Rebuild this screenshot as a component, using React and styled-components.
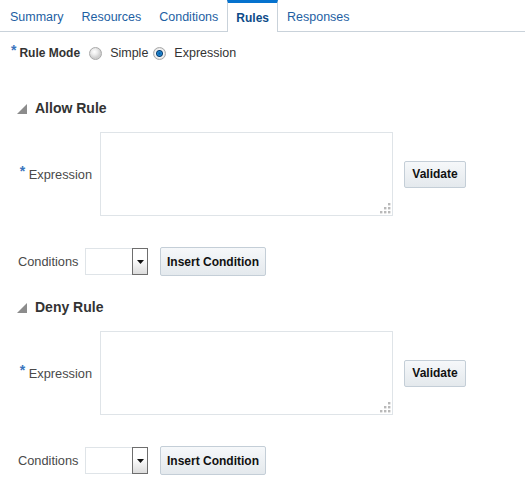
import React from "react";
import styled, { createGlobalStyle } from "styled-components";

const GlobalStyle = createGlobalStyle`
    body {
        margin: 0;
        background: #fff;
        font-family: "Liberation Sans", Arial, sans-serif;
    }
`;

const tabs = ["Summary", "Resources", "Conditions", "Rules", "Responses"];

function Disclosure() {
    return (
        <svg width="11" height="10" viewBox="0 0 11 10">
            <polygon points="10,0 10,10 0,10" fill="#8c8c8c" />
        </svg>
    );
}

function Grip() {
    const dots = [
        [9, 1],
        [5, 5],
        [9, 5],
        [1, 9],
        [5, 9],
        [9, 9],
    ];
    return (
        <GripBox>
            <svg width="11" height="11" viewBox="0 0 11 11">
                {dots.map(([x, y], i) => (
                    <rect key={i} x={x - 1} y={y - 1} width="2.4" height="2.4" fill="#b9b9b9" />
                ))}
            </svg>
        </GripBox>
    );
}

function RuleSection({ title, first }) {
    return (
        <Section first={first}>
            <SectionHeader>
                <Disclosure />
                <SectionTitle>{title}</SectionTitle>
            </SectionHeader>
            <ExpressionRow>
                <ExprLabel>
                    <Req>*</Req> Expression
                </ExprLabel>
                <AreaWrap>
                    <TextArea />
                    <Grip />
                </AreaWrap>
                <Button wide={62} tall={27}>Validate</Button>
            </ExpressionRow>
            <ConditionRow>
                <CondLabel>Conditions</CondLabel>
                <Select>
                    <SelectValue />
                    <SelectButton>
                        <svg width="7" height="4" viewBox="0 0 7 4">
                            <polygon points="0,0 7,0 3.5,4" fill="#111" />
                        </svg>
                    </SelectButton>
                </Select>
                <Button wide={106} tall={29}>Insert Condition</Button>
            </ConditionRow>
        </Section>
    );
}

export default function App() {
    return (
        <>
            <GlobalStyle />
            <Page>
                <TabBar>
                    {tabs.map((t) => (
                        <Tab key={t} active={t === "Rules"}>
                            {t}
                        </Tab>
                    ))}
                </TabBar>
                <ModeRow>
                    <Req>*</Req>
                    <ModeLabel>Rule Mode</ModeLabel>
                    <Radio />
                    <RadioText>Simple</RadioText>
                    <Radio checked />
                    <RadioText>Expression</RadioText>
                </ModeRow>
                <RuleSection title="Allow Rule" first />
                <RuleSection title="Deny Rule" />
            </Page>
        </>
    );
}

const Page = styled.div`
    width: 525px;
    color: #333;
`;

const TabBar = styled.div`
    display: flex;
    align-items: flex-end;
    height: 31px;
    padding-left: 1px;
    border-bottom: 1px solid #c9d2da;
`;

const Tab = styled.div`
    height: 32px;
    margin-bottom: ${(p) => (p.active ? "-1px" : "0")};
    box-sizing: border-box;
    display: flex;
    align-items: center;
    padding: 0 ${(p) => (p.active ? "8px" : "9px")};
    padding-top: ${(p) => (p.active ? "0" : "3px")};
    font-size: ${(p) => (p.active ? "12px" : "12.5px")};
    font-weight: ${(p) => (p.active ? "bold" : "normal")};
    color: ${(p) => (p.active ? "#0d4b88" : "#1e5fa3")};
    background: #fff;
    border-top: ${(p) => (p.active ? "3px solid #0572ce" : "none")};
    border-left: ${(p) => (p.active ? "1px solid #c9d2da" : "none")};
    border-right: ${(p) => (p.active ? "1px solid #c9d2da" : "none")};
`;

const Req = styled.span`
    color: #3a74bd;
    font-size: 14px;
    font-weight: bold;
    position: relative;
    top: -3px;
`;

const ModeRow = styled.div`
    display: flex;
    align-items: center;
    height: 20px;
    margin-top: 11px;
    padding-left: 11px;
    font-size: 12.5px;
`;

const ModeLabel = styled.span`
    margin-left: 3px;
    font-weight: bold;
    font-size: 12px;
    color: #333;
    margin-right: 9px;
`;

const Radio = styled.span`
    width: 11px;
    height: 11px;
    border-radius: 50%;
    border: 1px solid #a9a9a9;
    background: ${(p) =>
        p.checked
            ? "radial-gradient(circle, #0b5da8 0, #1f86d0 2px, #0b3f70 3px, #f6f6f6 4px, #d8d8d8 6px)"
            : "radial-gradient(circle at 40% 35%, #ffffff 0, #ececec 3px, #cfcfcf 6px)"};
    margin-right: 8px;
`;

const RadioText = styled.span`
    color: #333;
    margin-right: 5px;
`;

const Section = styled.div`
    margin-top: ${(p) => (p.first ? "35px" : "21px")};
`;

const SectionHeader = styled.div`
    display: flex;
    align-items: center;
    height: 20px;
    padding-left: 17px;
    gap: 7px;
    svg {
        margin-top: 1px;
    }
`;

const SectionTitle = styled.span`
    font-size: 14px;
    font-weight: bold;
    color: #333;
`;

const ExpressionRow = styled.div`
    display: flex;
    align-items: center;
    margin-top: 14px;
    padding-left: 18px;
`;

const ExprLabel = styled.span`
    width: 74px;
    margin-right: 8px;
    text-align: right;
    font-size: 12.8px;
    color: #4a4a4a;
    white-space: nowrap;
`;

const AreaWrap = styled.div`
    position: relative;
    width: 293px;
    height: 84px;
`;

const TextArea = styled.textarea`
    display: block;
    width: 100%;
    height: 100%;
    box-sizing: border-box;
    border: 1px solid #dfe4e8;
    resize: none;
    outline: none;
    margin: 0;
    padding: 2px;
`;

const GripBox = styled.div`
    position: absolute;
    right: 2px;
    bottom: 2px;
    line-height: 0;
`;

const Button = styled.div`
    width: ${(p) => p.wide}px;
    height: ${(p) => p.tall}px;
    box-sizing: border-box;
    display: flex;
    align-items: center;
    justify-content: center;
    border: 1px solid #c4ced7;
    border-radius: 2px;
    background: linear-gradient(#f6f8fa, #e4e9ed);
    font-size: 12px;
    font-weight: bold;
    color: #111;
    margin-left: 11px;
    white-space: nowrap;
`;

const ConditionRow = styled.div`
    display: flex;
    align-items: center;
    margin-top: 31px;
    padding-left: 18px;
    height: 29px;
    ${Button} {
        margin-left: 12px;
    }
`;

const CondLabel = styled.span`
    width: 67px;
    font-size: 12.8px;
    color: #4a4a4a;
`;

const Select = styled.div`
    display: flex;
    width: 63px;
    height: 27px;
    box-sizing: border-box;
    border: 1px solid #dfe4e8;
    border-right: none;
    background: #fff;
`;

const SelectValue = styled.div`
    flex: 1;
`;

const SelectButton = styled.div`
    width: 16px;
    margin-top: -1px;
    margin-bottom: -1px;
    box-sizing: border-box;
    border: 1px solid #6e6e6e;
    background: linear-gradient(#ffffff 40%, #dcdcdc);
    display: flex;
    align-items: center;
    justify-content: center;
`;
